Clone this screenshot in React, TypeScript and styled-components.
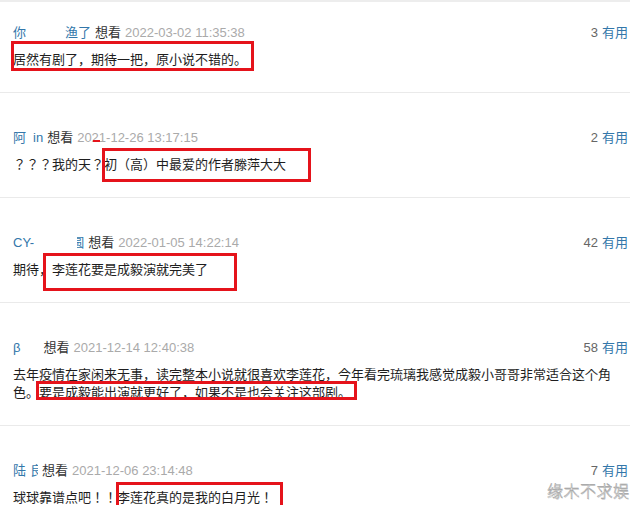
import React from 'react';
import styled, { createGlobalStyle } from 'styled-components';

const GlobalStyle = createGlobalStyle`
  body {
    margin: 0;
    background: #ffffff;
  }
`;

const Screen = styled.div`
  position: relative;
  width: 640px;
  height: 505px;
  overflow: hidden;
  background: #ffffff;
  font-family: "Liberation Sans", "Noto Sans CJK SC", sans-serif;
`;

const List = styled.div`
  width: 630px;
  border-top: 2px solid #ededed;
`;

const Item = styled.div<{ $first?: boolean }>`
  padding: ${(p) => (p.$first ? 21 : 35)}px 2px 24px 13px;
  border-bottom: 1px solid #eaeaea;
`;

const Header = styled.div`
  display: flex;
  align-items: center;
  justify-content: space-between;
  height: 20px;
  line-height: 20px;
  font-size: 13px;
`;

const Meta = styled.div`
  display: flex;
  align-items: center;
  white-space: nowrap;
`;

const Name = styled.span`
  display: inline-flex;
  align-items: center;
  color: #3377aa;
`;

const Gap = styled.span<{ $w: number }>`
  display: inline-block;
  width: ${(p) => p.$w}px;
`;

const Clip = styled.span<{ $w: number; $shift: number }>`
  display: inline-block;
  width: ${(p) => p.$w}px;
  overflow: hidden;

  span {
    display: inline-block;
    margin-left: ${(p) => p.$shift}px;
  }
`;

const Status = styled.span`
  margin-left: 4px;
  color: #333333;
`;

const Time = styled.span`
  position: relative;
  margin-left: 4px;
  color: #aaaaaa;
`;

const Dash = styled.span`
  position: absolute;
  left: 16px;
  top: 12px;
  width: 7px;
  height: 2px;
  background: #e5131b;
`;

const Votes = styled.div`
  color: #666666;

  span {
    margin-left: 4px;
    color: #3377aa;
  }
`;

const Comment = styled.p`
  width: 604px;
  margin: 7px 0 0;
  font-family: "Noto Sans CJK JP", "Noto Sans CJK SC", "Liberation Sans", sans-serif;
  font-size: 13px;
  line-height: 18px;
  color: #1e1e1e;
`;

const Mark = styled.span<{ $t: number; $r: number; $b: number; $l: number }>`
  position: relative;

  &::after {
    content: '';
    position: absolute;
    top: ${(p) => p.$t}px;
    right: ${(p) => p.$r}px;
    bottom: ${(p) => p.$b}px;
    left: ${(p) => p.$l}px;
    border: 3px solid #e5131b;
    pointer-events: none;
  }
`;

const Watermark = styled.div`
  position: absolute;
  top: 478px;
  left: 547px;
  font-family: "Noto Sans CJK SC", sans-serif;
  font-size: 16px;
  font-weight: 300;
  letter-spacing: 0.5px;
  color: #ffffff;
  -webkit-text-stroke: 0.45px #9c9c9c;
  text-shadow: 0.5px 0.5px 0 rgba(170, 170, 170, 0.6);
`;

type Box = [number, number, number, number];

interface Review {
  name: React.ReactNode;
  time: string;
  votes: number;
  before?: string;
  marked: string;
  box: Box;
  dash?: boolean;
}

const reviews: Review[] = [
  {
    name: (
      <>
        你<Gap $w={39} />渔了
      </>
    ),
    time: '2022-03-02 11:35:38',
    votes: 3,
    marked: '居然有剧了，期待一把，原小说不错的。',
    box: [-8, -7, -3, -2],
  },
  {
    name: (
      <>
        阿<Gap $w={7} />in
      </>
    ),
    time: '2021-12-26 13:17:15',
    votes: 2,
    before: '？？？我的天？',
    marked: '初（高）中最爱的作者滕萍大大',
    box: [-6, -25, -9, -2],
    dash: true,
  },
  {
    name: (
      <>
        CY-<Gap $w={43} />
        <Clip $w={7} $shift={-6}>
          <span>圆</span>
        </Clip>
      </>
    ),
    time: '2022-01-05 14:22:14',
    votes: 42,
    before: '期待，',
    marked: '李莲花要是成毅演就完美了',
    box: [-6, -29, -13, -9],
  },
  {
    name: (
      <>
        β<Gap $w={19} />
      </>
    ),
    time: '2021-12-14 12:40:38',
    votes: 58,
    before:
      '去年疫情在家闲来无事，读完整本小说就很喜欢李莲花，今年看完琉璃我感觉成毅小哥哥非常适合这个角色。',
    marked: '要是成毅能出演就更好了，如果不是也会关注这部剧。',
    box: [-1, -6, 1, -3],
  },
  {
    name: (
      <>
        陆<Gap $w={4} />
        <Clip $w={8} $shift={0}>
          <span>良</span>
        </Clip>
      </>
    ),
    time: '2021-12-06 23:14:48',
    votes: 7,
    before: '球球靠谱点吧！！',
    marked: '李莲花真的是我的白月光！',
    box: [-5, -10, -14, -1],
  },
];

const App: React.FC = () => {
  return (
    <Screen>
      <GlobalStyle />
      <List>
        {reviews.map((r, i) => (
          <Item key={r.time} $first={i === 0}>
            <Header>
              <Meta>
                <Name>{r.name}</Name>
                <Status>想看</Status>
                <Time>
                  {r.time}
                  {r.dash && <Dash />}
                </Time>
              </Meta>
              <Votes>
                {r.votes}
                <span>有用</span>
              </Votes>
            </Header>
            <Comment>
              {r.before}
              <Mark $t={r.box[0]} $r={r.box[1]} $b={r.box[2]} $l={r.box[3]}>
                {r.marked}
              </Mark>
            </Comment>
          </Item>
        ))}
      </List>
      <Watermark>缘木不求娱</Watermark>
    </Screen>
  );
};

export default App;
